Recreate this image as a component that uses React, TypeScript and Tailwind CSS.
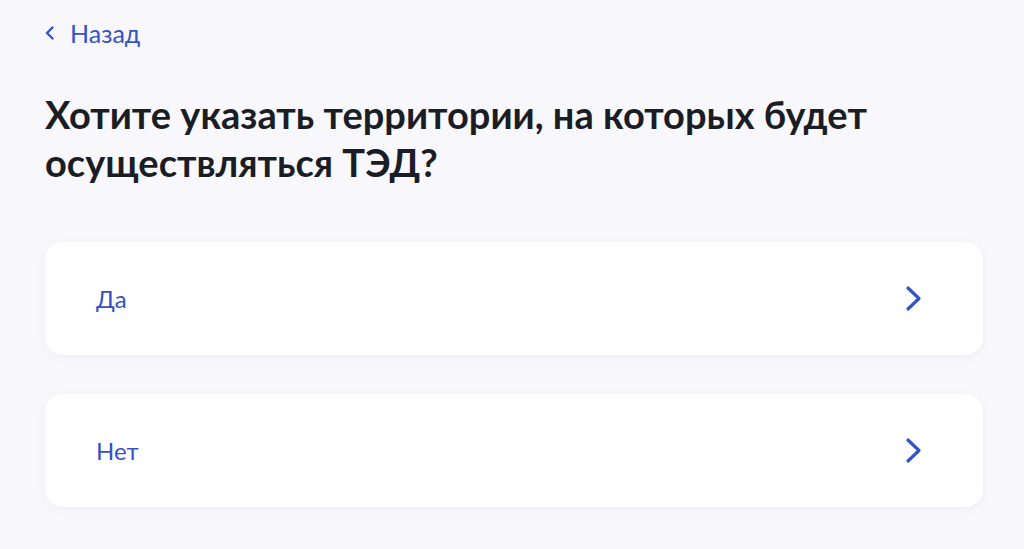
const options = ['Да', 'Нет'];

function ArrowRight() {
  return (
    <svg width="18" height="27" viewBox="0 0 18 27" fill="none">
      <path d="M3 3l11 10.5L3 24" stroke="#3453c5" strokeWidth="3.2" strokeLinecap="round" strokeLinejoin="round" />
    </svg>
  );
}

function ArrowLeft() {
  return (
    <svg width="10" height="14" viewBox="0 0 10 14" fill="none">
      <path d="M7.5 1.5L2 7l5.5 5.5" stroke="#3453c5" strokeWidth="2.4" strokeLinecap="round" strokeLinejoin="round" />
    </svg>
  );
}

export default function App() {
  return (
    <div className="min-h-screen bg-[#f8f8fc] font-['Lato','Noto_Sans',sans-serif] px-[45px] pt-[18px]">
      <a className="flex items-center gap-[15px] text-[#3453c5] text-[25px] leading-[30px] w-fit cursor-pointer">
        <ArrowLeft />
        <span>Назад</span>
      </a>

      <h1 className="mt-[42px] text-[38px] leading-[48px] font-bold text-[#1b1d25] max-w-[900px]">
        Хотите указать территории, на которых будет осуществляться ТЭД?
      </h1>

      <div className="mt-[56px] flex flex-col gap-[39px] w-[938px]">
        {options.map(o => (
          <button
            key={o}
            className="h-[113px] bg-white rounded-[18px] shadow-[0_2px_8px_rgba(100,110,160,0.08)] flex items-center justify-between pl-[51px] pr-[60px] text-left"
          >
            <span className="text-[24px] text-[#3453c5]">{o}</span>
            <ArrowRight />
          </button>
        ))}
      </div>
    </div>
  );
}
